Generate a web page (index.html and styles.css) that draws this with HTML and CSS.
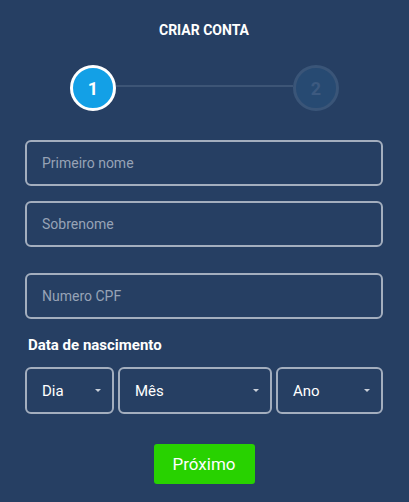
FILE: index.html
```html
<!DOCTYPE html>
<html lang="pt-BR">
<head>
  <meta charset="UTF-8">
  <title>Criar conta</title>
  <link rel="stylesheet" href="styles.css">
</head>
<body>
  <div class="container">
    <h1>CRIAR CONTA</h1>

    <div class="stepper">
      <div class="step active">1</div>
      <div class="step-line"></div>
      <div class="step">2</div>
    </div>

    <div class="field first">
      <input type="text" placeholder="Primeiro nome">
    </div>
    <div class="field">
      <input type="text" placeholder="Sobrenome">
    </div>
    <div class="field cpf">
      <input type="text" placeholder="Numero CPF">
    </div>

    <label class="birth-label">Data de nascimento</label>
    <div class="birth-row">
      <div class="select day">Dia <span class="caret"></span></div>
      <div class="select month">Mês <span class="caret"></span></div>
      <div class="select year">Ano <span class="caret"></span></div>
    </div>

    <div class="actions">
      <button>Próximo</button>
    </div>
  </div>
</body>
</html>
```

FILE: styles.css
```css
body {
  margin: 0;
  background-color: #263f63;
  font-family: Roboto, "Liberation Sans", sans-serif;
}
.container {
  padding: 0 26px 0 25px;
}
h1 {
  margin: 0;
  padding-top: 22px;
  color: #ffffff;
  font-size: 14px;
  font-weight: bold;
  text-align: center;
  line-height: 16px;
}
.stepper {
  display: flex;
  align-items: center;
  margin-top: 27px;
  padding: 0 44px 0 45px;
}
.step {
  width: 40px;
  height: 40px;
  border-radius: 50%;
  border: 3px solid #3a5578;
  background-color: #274a72;
  color: #3d5a80;
  font-size: 18px;
  font-weight: bold;
  display: flex;
  align-items: center;
  justify-content: center;
  flex-shrink: 0;
}
.step.active {
  background-color: #13a0e6;
  border-color: #ffffff;
  color: #ffffff;
}
.step-line {
  flex: 1;
  height: 2px;
  margin-top: -4px;
  background-color: #3d5576;
}
.field {
  margin-top: 15px;
}
.field.first {
  margin-top: 29px;
}
.field.cpf {
  margin-top: 26px;
}
input[type="text"] {
  width: 100%;
  height: 46px;
  box-sizing: border-box;
  padding: 0 15px;
  background: transparent;
  border: 2px solid #a3aebe;
  border-radius: 6px;
  color: #ffffff;
  font-family: inherit;
  font-size: 14px;
}
input::placeholder {
  color: #97a3b6;
}
.birth-label {
  display: block;
  margin-top: 17px;
  padding-left: 3px;
  color: #ffffff;
  font-size: 15px;
  font-weight: bold;
  line-height: 18px;
}
.birth-row {
  display: flex;
  gap: 4px;
  margin-top: 13px;
}
.select {
  height: 47px;
  box-sizing: border-box;
  border: 2px solid #a3aebe;
  border-radius: 6px;
  padding: 0 11px 0 15px;
  display: flex;
  align-items: center;
  justify-content: space-between;
  color: #ffffff;
  font-size: 15px;
}
.select.day { width: 89px; }
.select.month { width: 154px; }
.select.year { flex: 1; }
.caret {
  width: 0;
  height: 0;
  border-left: 3px solid transparent;
  border-right: 3px solid transparent;
  border-top: 3px solid #c9d0da;
}
.actions {
  display: flex;
  justify-content: center;
  margin-top: 30px;
}
button {
  width: 101px;
  height: 40px;
  border: none;
  border-radius: 3px;
  background-color: #28d200;
  color: #ffffff;
  font-family: inherit;
  font-size: 17px;
  cursor: pointer;
}
```
